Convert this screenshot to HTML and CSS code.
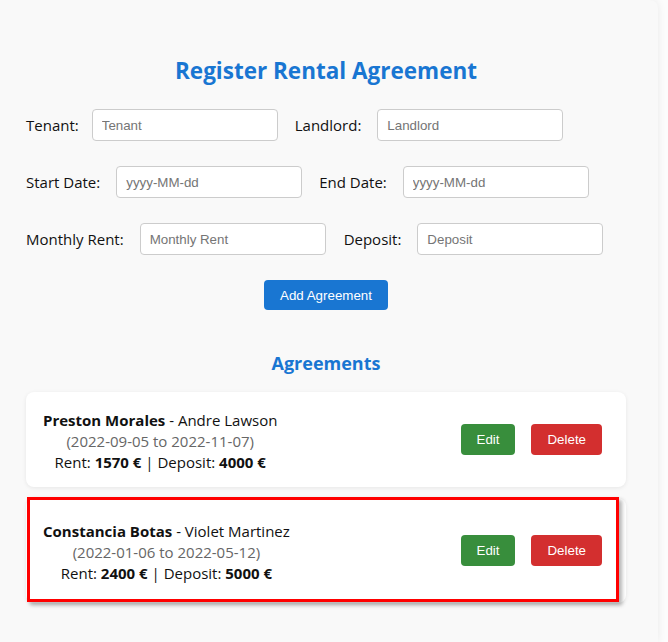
FILE: index.html
```html
<!DOCTYPE html>
<html lang="en">
<head>
<meta charset="utf-8">
<title>Register Rental Agreement</title>
<link rel="stylesheet" href="styles.css">
</head>
<body>
<div class="container">
  <h2 class="title">Register Rental Agreement</h2>
  <form class="form">
    <div class="row">
      <label class="label label-tight">Tenant:</label>
      <input class="input" type="text" placeholder="Tenant">
      <label class="label">Landlord:</label>
      <input class="input" type="text" placeholder="Landlord">
    </div>
    <div class="row">
      <label class="label">Start Date:</label>
      <input class="input" type="text" placeholder="yyyy-MM-dd">
      <label class="label">End Date:</label>
      <input class="input" type="text" placeholder="yyyy-MM-dd">
    </div>
    <div class="row">
      <label class="label">Monthly Rent:</label>
      <input class="input input-wide-gap" type="text" placeholder="Monthly Rent">
      <label class="label">Deposit:</label>
      <input class="input" type="text" placeholder="Deposit">
    </div>
    <div class="actions">
      <button class="btn btn-primary" type="button">Add Agreement</button>
    </div>
  </form>
  <h3 class="subtitle">Agreements</h3>
  <div class="list">
    <div class="card">
      <div class="info">
        <div><b>Preston Morales</b> - Andre Lawson</div>
        <div class="dates">(2022-09-05 to 2022-11-07)</div>
        <div>Rent: <b>1570 €</b> | Deposit: <b>4000 €</b></div>
      </div>
      <div class="buttons">
        <button class="btn btn-edit" type="button">Edit</button>
        <button class="btn btn-delete" type="button">Delete</button>
      </div>
    </div>
    <div class="card card-selected">
      <div class="info">
        <div><b>Constancia Botas</b> - Violet Martinez</div>
        <div class="dates">(2022-01-06 to 2022-05-12)</div>
        <div>Rent: <b>2400 €</b> | Deposit: <b>5000 €</b></div>
      </div>
      <div class="buttons">
        <button class="btn btn-edit" type="button">Edit</button>
        <button class="btn btn-delete" type="button">Delete</button>
      </div>
      <div class="highlight"></div>
    </div>
  </div>
</div>
</body>
</html>
```

FILE: styles.css
```css
html, body {
  margin: 0;
  padding: 0;
  background: #fcfcfc;
}
body {
  font-family: "Open Sans", "Liberation Sans", sans-serif;
  font-size: 15px;
  color: #111;
  overflow: hidden;
}
.container {
  box-sizing: border-box;
  width: 662px;
  min-height: 100vh;
  margin-left: -4px;
  padding: 20px 32px 20px 30px;
  background: #f9f9f9;
  border-radius: 0 8px 0 0;
  box-shadow: 0 0 8px rgba(0, 0, 0, 0.08);
}
.title {
  margin: 35px 0 22px;
  text-align: center;
  color: #1976d2;
  font-size: 22.5px;
  line-height: 32px;
  font-weight: 700;
}
.form {
  margin: 0;
}
.row {
  display: flex;
  align-items: center;
  margin-bottom: 25px;
}
.label {
  margin-right: 16px;
  line-height: 21px;
}
.label-tight {
  margin-right: 13px;
}
.input {
  box-sizing: border-box;
  width: 186px;
  height: 32px;
  margin: 0 17px 0 0;
  padding: 0 9px;
  border: 1px solid #ccc;
  border-radius: 4px;
  background: #fff;
  font-family: "Liberation Sans", Arial, sans-serif;
  font-size: 13.333px;
  color: #222;
}
.input-wide-gap {
  margin-right: 18px;
}
.input::placeholder {
  color: #757575;
}
.actions {
  display: flex;
  justify-content: center;
}
.btn {
  height: 30px;
  padding: 0 16px;
  border: none;
  border-radius: 4px;
  color: #fff;
  font-family: "Liberation Sans", Arial, sans-serif;
  font-size: 13.333px;
  cursor: pointer;
}
.btn-primary {
  background: #1976d2;
}
.subtitle {
  margin: 40px 0 15px;
  text-align: center;
  color: #1976d2;
  font-size: 18px;
  line-height: 27px;
  font-weight: 700;
}
.list {
  display: flex;
  flex-direction: column;
  gap: 11px;
}
.card {
  position: relative;
  display: flex;
  align-items: center;
  justify-content: space-between;
  padding: 18px 16px 14px 17px;
  background: #fff;
  border-radius: 8px;
  box-shadow: 0 1px 4px rgba(0, 0, 0, 0.08);
}
.card-selected {
  padding-top: 23px;
  padding-bottom: 19px;
}
.info {
  text-align: center;
  line-height: 21px;
}
.dates {
  color: #666;
}
.buttons {
  display: flex;
  gap: 16px;
  margin-right: 8px;
  margin-bottom: 4px;
}
.btn-edit {
  height: 31px;
  background: #388e3c;
}
.btn-delete {
  height: 31px;
  background: #d32f2f;
}
.highlight {
  position: absolute;
  left: 1px;
  top: -1px;
  width: 592px;
  height: 105px;
  box-sizing: border-box;
  border: 3px solid #ff0000;
  box-shadow: 3px 3px 4px rgba(0, 0, 0, 0.3);
  pointer-events: none;
}
```
